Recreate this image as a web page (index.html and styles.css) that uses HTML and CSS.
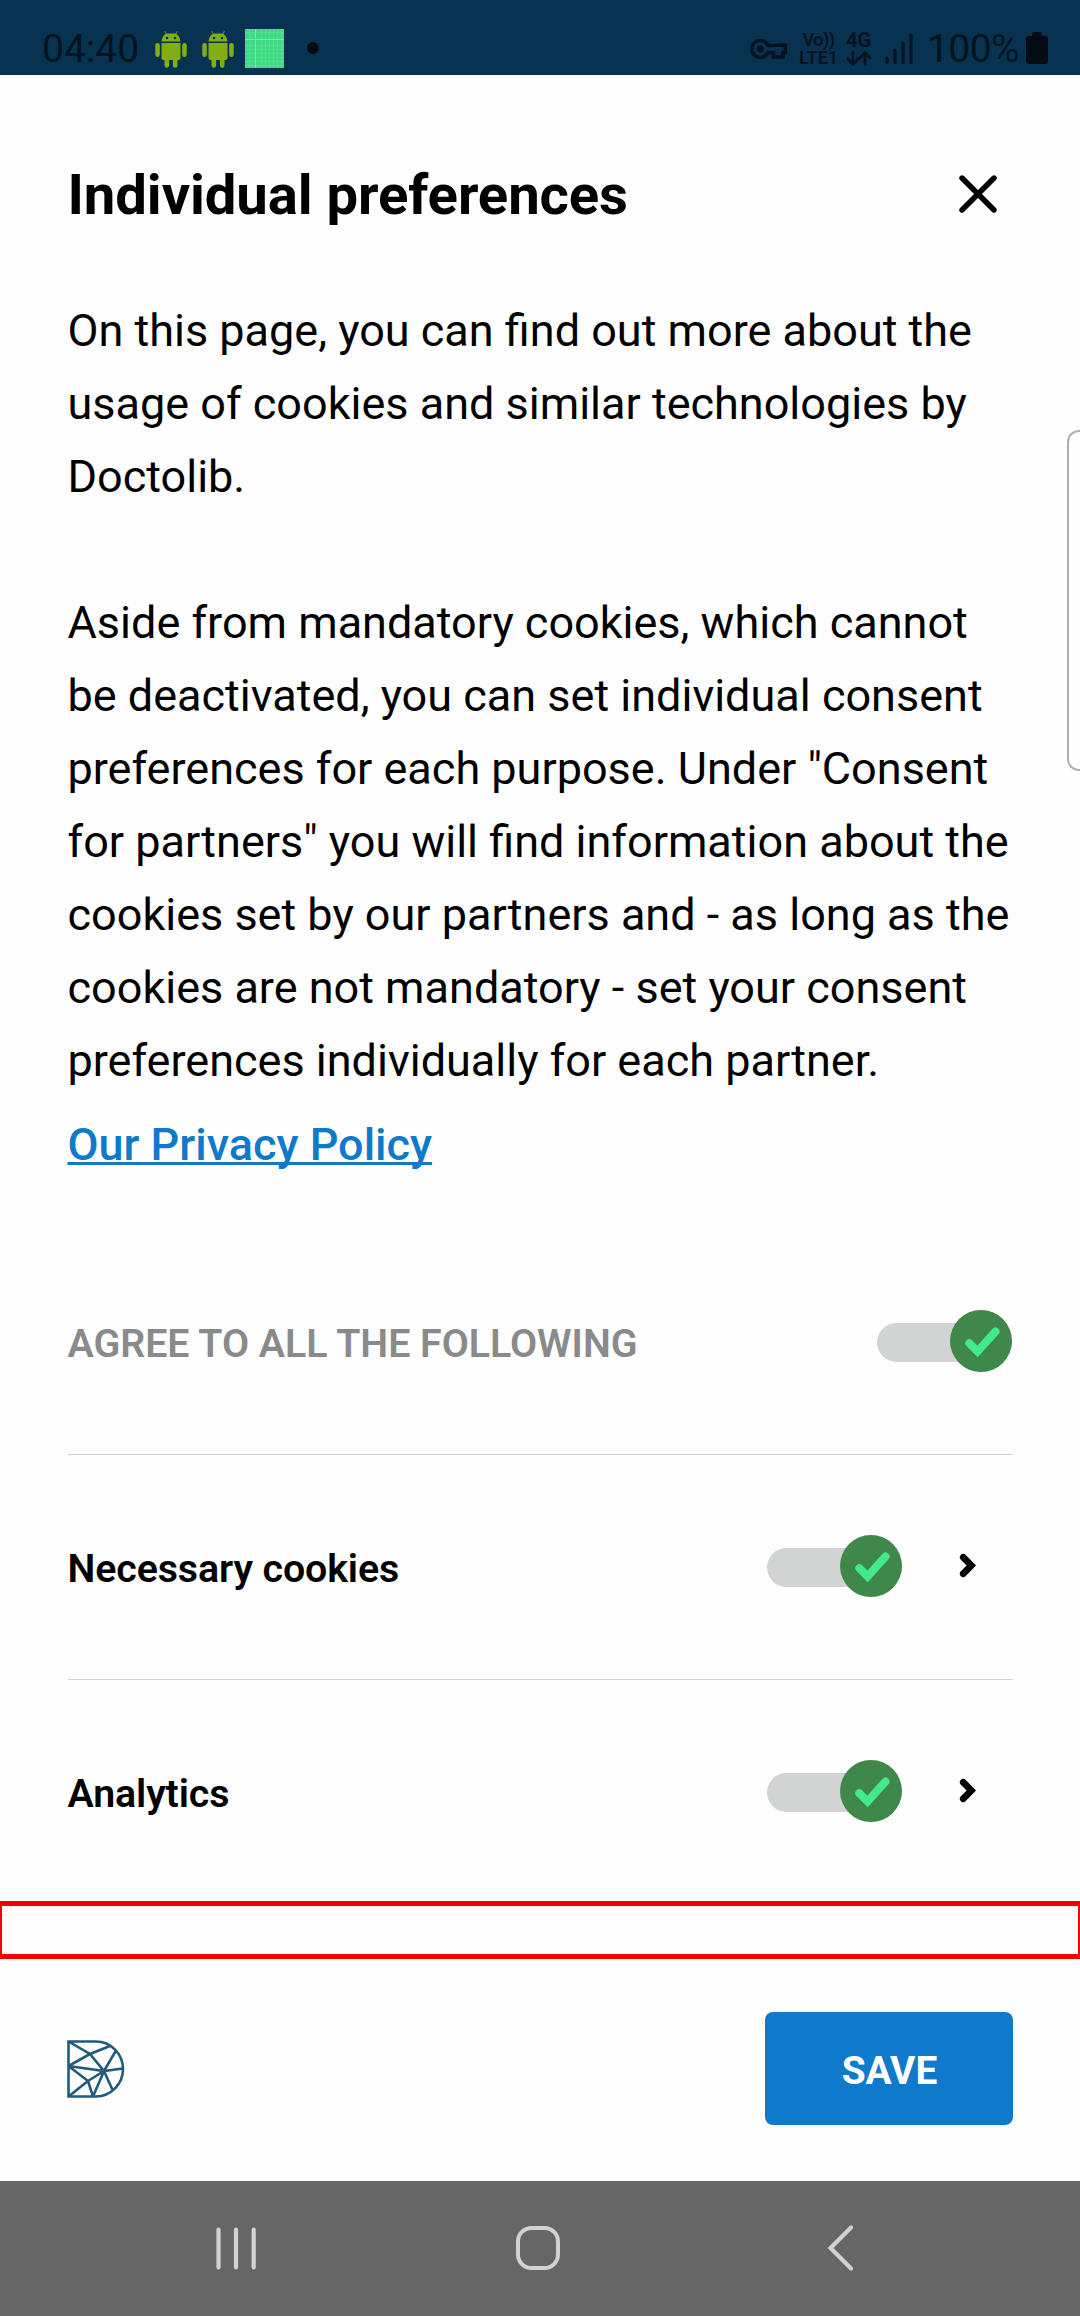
FILE: index.html
```html
<!DOCTYPE html>
<html lang="en">
<head>
<meta charset="utf-8">
<title>Individual preferences</title>
<link rel="stylesheet" href="styles.css">
</head>
<body>
<svg class="defs" aria-hidden="true">
  <symbol id="android" viewBox="0 0 32 38">
    <path d="M9.500 1l2 3.500M22.500 1l-2 3.500" stroke="#527f3d" stroke-width="1.200"/>
    <path d="M6.500 11.500C7 6.500 10 3.500 12.500 3.500h7c2.500 0 5.500 3 6 8zM6.500 13h19v15a2 2 0 0 1-2 2h-1v5.500a2.300 2.300 0 0 1-4.600 0V30h-3.800v5.500a2.300 2.300 0 0 1-4.600 0V30h-1a2 2 0 0 1-2-2z"/>
    <rect x="0.300" y="13" width="4.500" height="14" rx="2.200"/>
    <rect x="27.200" y="13" width="4.500" height="14" rx="2.200"/>
    <circle cx="12" cy="8" r="1.300" fill="#073250"/><circle cx="20" cy="8" r="1.300" fill="#073250"/>
  </symbol>
  <symbol id="check" viewBox="0 0 62 62">
    <path d="M19.300 33.200L27.600 41.500L45.500 21.500" fill="none" stroke="#42e98d" stroke-width="8" stroke-linecap="round"/>
  </symbol>
  <symbol id="chevron" viewBox="0 0 18 26">
    <path d="M4.300 4.300L12.300 12.500L4.300 20.700" fill="none" stroke="#000" stroke-width="6.800" stroke-linecap="round"/>
  </symbol>
</svg>

<header class="status">
  <span class="clock">04:40</span>
  <svg class="droid"><use href="#android"/></svg>
  <svg class="droid"><use href="#android"/></svg>
  <svg class="grid-icon" viewBox="0 0 39 39">
    <rect width="39" height="39" fill="#3ddc84"/>
    <path d="M4.500 0v39M16.500 0v39M20.500 0v39M24.500 0v39M28.500 0v39M32.500 0v39M36.500 0v39M0 3.500h39M0 16.500h39M0 20.500h39M0 24.500h39M0 28.500h39M0 32.500h39M0 36.500h39" stroke="#5ce096" stroke-width=".6"/>
    <path d="M10.500 0v39M0 10.500h39" stroke="#7be8aa"/>
  </svg>
  <span class="dot"></span>
  <span class="spacer"></span>
  <svg class="key" viewBox="0 0 37 22">
    <path d="M18 7.500A8.500 8.500 0 1 0 18 14.500h5.500v4.500h9.500v-4.500h2.200V7z" fill="none" stroke="#03131f" stroke-width="3.600"/>
    <circle cx="10.300" cy="11" r="3.600" fill="#03131f"/>
  </svg>
  <span class="volte"><span class="vo">Vo))</span><span>LTE1</span></span>
  <span class="net"><span>4G</span>
    <svg viewBox="0 0 25 15"><path d="M7 0v13M1 7l6 6.500L13 7M19 14.500V2M13.500 7.500L19 1.500l5.500 6" fill="none" stroke="#03131f" stroke-width="2.600"/></svg>
  </span>
  <svg class="signal" viewBox="0 0 28 30"><path d="M2 24v4.500M10 16v12.500M18 9v19.500M26 1.500v27" stroke="#03131f" stroke-width="3.200" stroke-linecap="round"/></svg>
  <span class="percent">100%</span>
  <svg class="battery" viewBox="0 0 22 32"><path d="M6 4V2a2 2 0 0 1 2-2h6a2 2 0 0 1 2 2v2h3a3 3 0 0 1 3 3v22a3 3 0 0 1-3 3H3a3 3 0 0 1-3-3V7a3 3 0 0 1 3-3z" fill="#030c14"/></svg>
</header>

<main class="sheet">
  <div class="title-row">
    <h1>Individual preferences</h1>
    <svg class="close" viewBox="0 0 38 38"><path d="M3 3L35 35M35 3L3 35" stroke="#000" stroke-width="5.400" stroke-linecap="round"/></svg>
  </div>
  <p class="intro">On this page, you can find out more about the<br>usage of cookies and similar technologies by<br>Doctolib.<br><br>Aside from mandatory cookies, which cannot<br>be deactivated, you can set individual consent<br>preferences for each purpose. Under "Consent<br>for partners" you will find information about the<br>cookies set by our partners and - as long as the<br>cookies are not mandatory - set your consent<br>preferences individually for each partner.</p>
  <a class="policy">Our Privacy Policy</a>

  <section class="options">
    <div class="option all">
      <span class="label">AGREE TO ALL THE FOLLOWING</span>
      <span class="toggle"><svg class="knob"><use href="#check"/></svg></span>
    </div>
    <div class="option">
      <span class="label">Necessary cookies</span>
      <span class="toggle"><svg class="knob"><use href="#check"/></svg></span>
      <svg class="chevron"><use href="#chevron"/></svg>
    </div>
    <div class="option">
      <span class="label">Analytics</span>
      <span class="toggle"><svg class="knob"><use href="#check"/></svg></span>
      <svg class="chevron"><use href="#chevron"/></svg>
    </div>
  </section>

  <footer class="actions">
    <svg class="logo" viewBox="0 0 58 58">
      <path d="M1.500 1.500H29a27 27.500 0 0 1 0 55H1.500zM1.500 1.500L23 14L37 31L55.500 28.500M1.500 26L23 14L43 6M1.500 26L37 31L49 10.500M1.500 26L21 41L26 56.500M1.500 56.500L21 41L37 31L26 56.500M37 31L46 51" fill="none" stroke="#215b79" stroke-width="2.600"/>
    </svg>
    <button class="save">SAVE</button>
  </footer>
  <div class="edge-handle"></div>
  <div class="highlight"></div>
</main>

<nav class="navbar">
  <svg class="recents" viewBox="0 0 44 48"><path d="M4.500 4.500v38M22 4.500v38M39.700 4.500v38" stroke="#d2d2d2" stroke-width="4.200" stroke-linecap="round"/></svg>
  <svg class="home" viewBox="0 0 44 44"><rect x="2" y="2" width="40" height="40" rx="13.500" fill="none" stroke="#d2d2d2" stroke-width="4"/></svg>
  <svg class="back" viewBox="0 0 28 48"><path d="M24 3.500L3.500 24L24 44.500" fill="none" stroke="#d2d2d2" stroke-width="4.200" stroke-linecap="round"/></svg>
</nav>
</body>
</html>
```
FILE: styles.css
```css
* { box-sizing: border-box; }
body {
  margin: 0;
  width: 1080px;
  height: 2316px;
  overflow: hidden;
  display: flex;
  flex-direction: column;
  font-family: Roboto, sans-serif;
  color: #000;
  background: #fefefe;
}
svg { display: block; flex: none; }
.defs { position: absolute; width: 0; height: 0; }

.status {
  height: 75px;
  flex: none;
  display: flex;
  align-items: flex-start;
  padding: 0 32px 0 42px;
  background: #073250;
  color: #03131f;
}
.clock, .percent { font-size: 39px; line-height: 48px; margin-top: 25px; white-space: nowrap; }
.clock { width: 113px; }
.droid { width: 32px; height: 38px; margin: 30px 15px 0 0; fill: #82ae14; }
.grid-icon { width: 39px; height: 39px; margin: 29px 23px 0 -4px; }
.dot { width: 12px; height: 12px; border-radius: 50%; background: #030b12; margin-top: 42px; }
.spacer { flex: 1; }
.key { width: 37px; height: 22px; margin: 38px 12px 0 0; }
.volte { display: flex; flex-direction: column; align-items: center; width: 39px; margin: 31px 8px 0 0; font-size: 18px; line-height: 18px; font-weight: 600; }
.vo { letter-spacing: -.5px; }
.net { display: flex; flex-direction: column; width: 26px; margin: 31px 13px 0 0; font-size: 20px; line-height: 18px; font-weight: 700; }
.net svg { width: 25px; height: 15px; margin-top: 2px; }
.signal { width: 28px; height: 30px; margin: 34px 15px 0 0; }
.percent { width: 98px; letter-spacing: -.6px; text-indent: -1px; }
.battery { width: 22px; height: 32px; margin-top: 32px; }

.sheet {
  position: relative;
  height: 2106px;
  flex: none;
  display: flex;
  flex-direction: column;
  padding: 0 67.500px;
}
.title-row { height: 219px; display: flex; justify-content: space-between; padding-right: 16px; }
h1 { margin: 87px 0 0; font-size: 56.250px; line-height: 66px; font-weight: 700; letter-spacing: -.1px; white-space: nowrap; }
.close { width: 38px; height: 38px; margin-top: 100px; }
.intro { margin: 0; font-size: 45px; line-height: 73px; white-space: nowrap; }
.policy {
  align-self: flex-start;
  margin-top: 11px;
  font-size: 45px;
  line-height: 73px;
  font-weight: 500;
  color: #107aca;
  text-decoration: underline;
  text-decoration-thickness: 3px;
  text-decoration-skip-ink: none;
  white-space: nowrap;
}
.options { margin-top: 49px; }
.option { height: 225px; display: flex; align-items: center; border-bottom: 1px solid #d2d4d4; }
.option:last-child { border-bottom-color: transparent; }
.label { flex: 1; font-size: 39.375px; font-weight: 600; letter-spacing: -.12px; line-height: 56px; padding-top: 4px; }
.all .label { color: #8a8a8a; letter-spacing: -.04px; }
.toggle {
  width: 135px;
  height: 39px;
  margin-right: 1px;
  border-radius: 20px;
  background: #d2d4d4;
  display: flex;
  justify-content: flex-end;
  align-items: center;
}
.knob { width: 62px; height: 62px; margin-bottom: 2px; border-radius: 50%; background: #3f874a; }
.chevron { width: 18px; height: 26px; margin: 0 35.500px 2px 56.500px; }
.actions { margin-top: 107px; height: 113px; display: flex; align-items: center; justify-content: space-between; }
.logo { width: 58px; height: 58px; margin-left: -1px; }
.save {
  width: 248px;
  height: 113px;
  border: 0;
  border-radius: 8px;
  padding: 4px 0 0 2px;
  background: #107aca;
  color: #fff;
  font: 700 38.800px Roboto, sans-serif;
}
.edge-handle {
  position: absolute;
  left: 1067px;
  top: 355px;
  width: 13px;
  height: 341px;
  border: 2px solid #b0b0b0;
  border-right: 0;
  border-radius: 12px 0 0 12px;
}
.highlight {
  position: absolute;
  left: 0;
  top: 1826px;
  width: 1080px;
  height: 58px;
  border: solid #f80000;
  border-width: 5px 2px;
}

.navbar { height: 135px; flex: none; display: flex; align-items: center; background: #666; }
.recents { width: 44px; height: 48px; margin-left: 214px; }
.home { width: 44px; height: 44px; margin: 0 0 2px 258px; }
.back { width: 28px; height: 48px; margin: 0 0 1px 267px; }
```
